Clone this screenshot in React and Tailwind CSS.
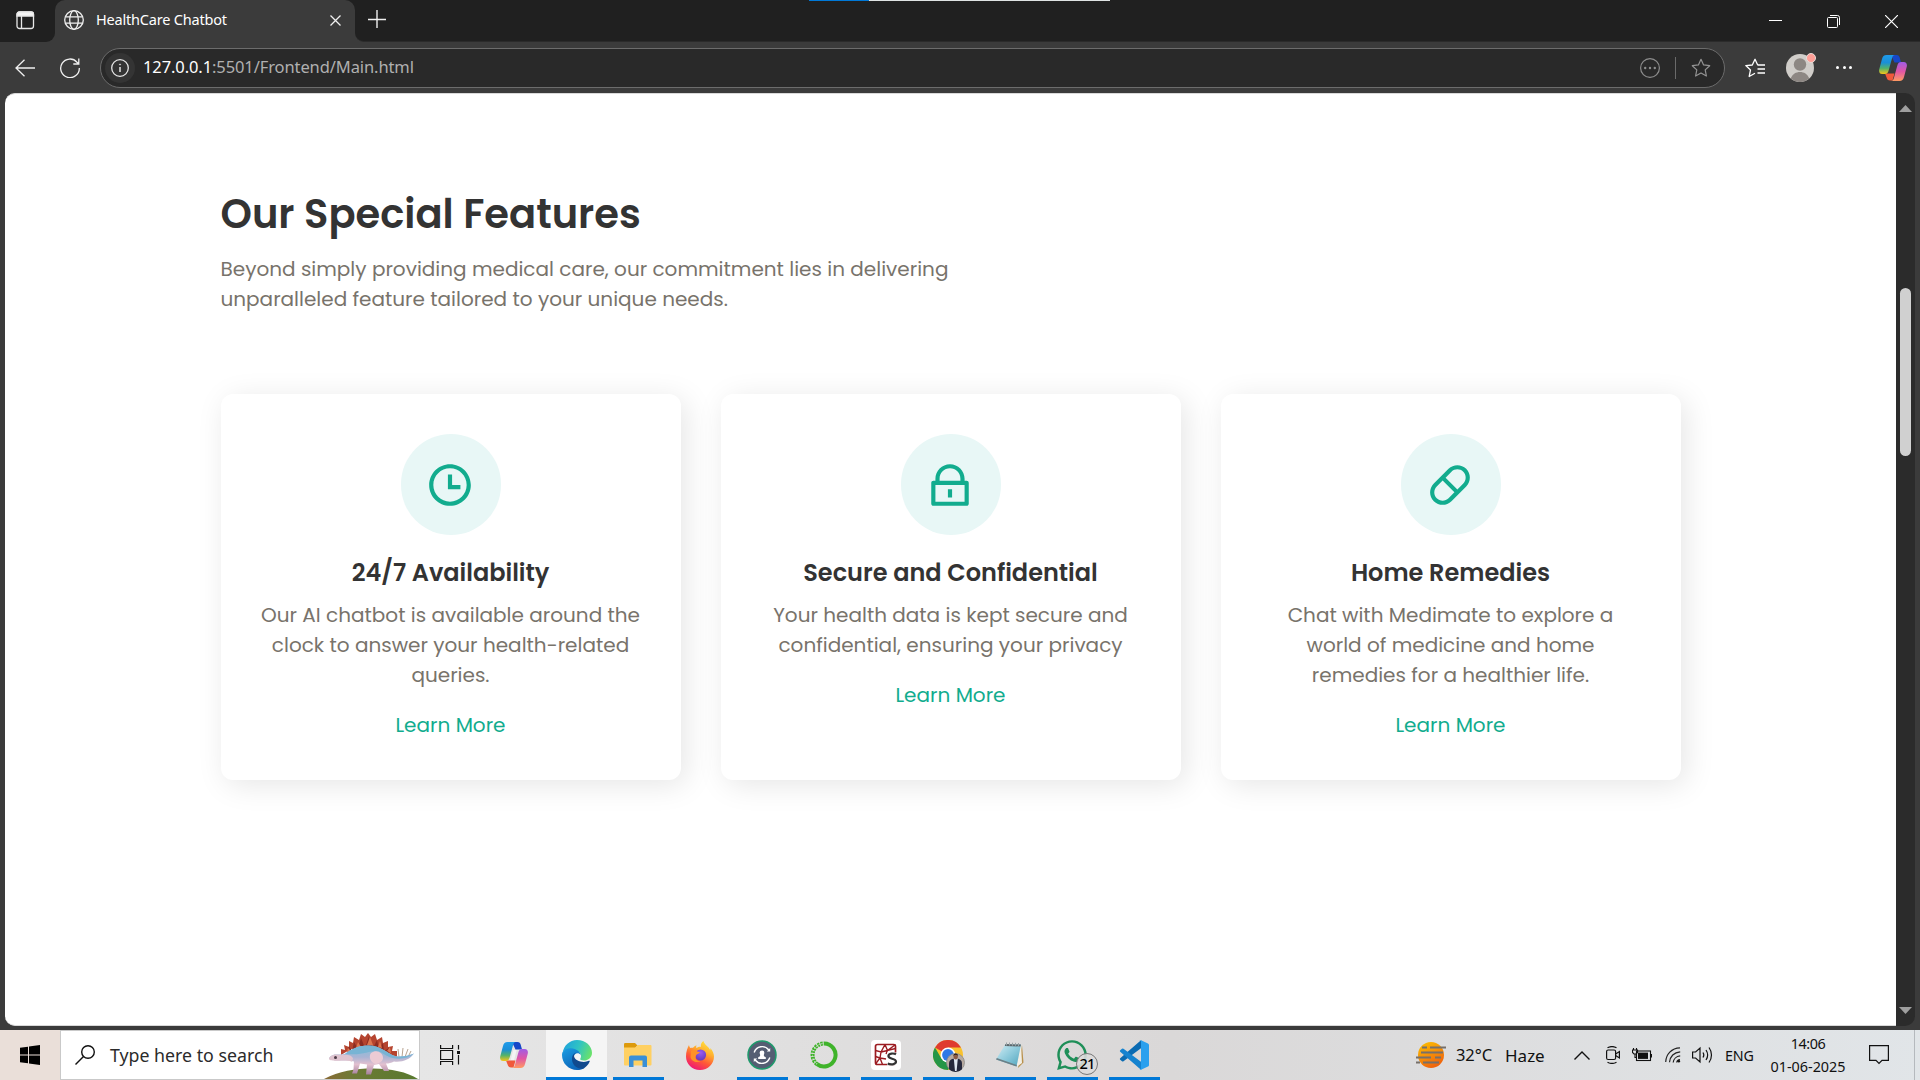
import React from "react";
import { RiTimeLine, RiLockLine, RiCapsuleLine } from "react-icons/ri";
import { FaWhatsapp } from "react-icons/fa";

const features = [
  {
    title: "24/7 Availability",
    Icon: RiTimeLine,
    text: "Our AI chatbot is available around the clock to answer your health-related queries.",
  },
  {
    title: "Secure and Confidential",
    Icon: RiLockLine,
    text: "Your health data is kept secure and confidential, ensuring your privacy",
  },
  {
    title: "Home Remedies",
    Icon: RiCapsuleLine,
    text: "Chat with Medimate to explore a world of medicine and home remedies for a healthier life.",
  },
];

function CopilotIcon({ id, hollow }) {
  return (
    <svg width="28" height="26" viewBox="0 0 28 26" className="shrink-0">
      <defs>
        <linearGradient id={id + "a"} x1="0" y1="0" x2="0" y2="1">
          <stop offset="0" stopColor="#1f9bea" />
          <stop offset=".4" stopColor="#1a8fd8" />
          <stop offset=".7" stopColor="#52b26b" />
          <stop offset="1" stopColor="#f5c518" />
        </linearGradient>
        <linearGradient id={id + "b"} x1="0" y1="0" x2="0" y2="1">
          <stop offset="0" stopColor="#a05ce6" />
          <stop offset=".5" stopColor="#e056a5" />
          <stop offset="1" stopColor="#ff9a62" />
        </linearGradient>
      </defs>
      <path d="M12 0h5.500c2 0 2.800 1.200 3.300 3l1.200 4.500h-6.500z" fill="#1747c8" />
      <path d="M6 18.500h9.500L13.500 25.500H11c-2 0-2.900-1.200-3.400-3z" fill="#f0593b" />
      <path
        d="M7.500 0H16c-1.600 0-2.400 1.300-2.900 3L9.800 15c-.7 2.500-1.600 4-4 4H3.200C.8 19-.3 17 .2 14.500L3 4C3.700 1.500 5 0 7.500 0z"
        fill={"url(#" + id + "a)"}
      />
      <path
        d="M20.500 26H12c1.600 0 2.400-1.300 2.900-3L18.200 11c.7-2.500 1.600-4 4-4h2.600c2.400 0 3.500 2 3 4.500L25 22c-.7 2.500-2 4-4.500 4z"
        fill={"url(#" + id + "b)"}
      />
      {hollow && <path d="M13.300 8h3.300l-2.500 10h-3.400z" fill="#f4f4f4" />}
    </svg>
  );
}

function EdgeIcon() {
  return (
    <svg width="30" height="30" viewBox="0 0 30 30">
      <defs>
        <linearGradient id="edgeTop" x1="0" y1=".3" x2="1" y2=".6">
          <stop offset="0" stopColor="#1fa3dc" />
          <stop offset=".5" stopColor="#2fc3c4" />
          <stop offset="1" stopColor="#6ae26a" />
        </linearGradient>
        <linearGradient id="edgeBlue" x1="0" y1="0" x2=".6" y2="1">
          <stop offset="0" stopColor="#1b9de2" />
          <stop offset="1" stopColor="#0c63b8" />
        </linearGradient>
      </defs>
      <path d="M.6 13C1.800 5.500 7.600 0 15 0c8.500 0 15 6 15 12.700 0 4.800-3.800 7.800-8 7.800-2.600 0-4.200-.8-3.700-1.700.8-1.500 1-3 .2-4.900C16.800 10 4 6 .6 13z" fill="url(#edgeTop)" />
      <path d="M0 15C0 11 4 8 9 8.300c5 .3 9.600 3.400 9.700 7C16.500 11.500 11.600 13.500 11.500 18c0 6 6 10.500 11.500 9.700C20.700 29.300 18 30 15 30 6.700 30 0 23.300 0 15z" fill="url(#edgeBlue)" />
      <path d="M15 12.200c-3.600 1-5 3.600-5 6.800 0 5.500 4.500 10 10.500 9.800 3-1.200 5.800-3.900 7.200-7.300.3-.8-.3-1-.8-.7C21.500 23.500 12.500 21 12 16c0-1.800 1.200-3.100 3-3.800z" fill="#114a8e" />
    </svg>
  );
}

function FolderIcon() {
  return (
    <svg width="28" height="24" viewBox="0 0 28 24">
      <path d="M0 1.200Q0 0 1.200 0H11l2.500 2.500L11 5H0z" fill="#dd9a0c" />
      <path d="M0 4.500h11.500l2-2.500H26.500Q27.500 2 27.500 3V21.500Q27.500 22.500 26.500 22.500H1Q0 22.500 0 21.500z" fill="#ffd062" />
      <path d="M5 24V14.500Q5 12.500 7 12.500H21Q23 12.500 23 14.500V24H18.500V17.500H9.500V24z" fill="#3a8fd6" />
    </svg>
  );
}

function FirefoxIcon() {
  return (
    <svg width="28" height="29" viewBox="0 0 28 29">
      <defs>
        <linearGradient id="fxBody" x1=".8" y1="0" x2=".3" y2="1">
          <stop offset="0" stopColor="#ffe940" />
          <stop offset=".35" stopColor="#ffb02e" />
          <stop offset=".65" stopColor="#ff5a36" />
          <stop offset="1" stopColor="#ee1478" />
        </linearGradient>
        <radialGradient id="fxGlobe" cx=".5" cy=".3" r=".8">
          <stop offset="0" stopColor="#9a5cf0" />
          <stop offset="1" stopColor="#5b34b5" />
        </radialGradient>
      </defs>
      <path d="M3 4c.2 1.400.7 2.300 1.500 3 .8-.3 1.700-.3 2.500-.2C8 5.500 9 4.800 10.500 4.300c-.4 1-.5 1.900-.2 2.700 2-1 3-1.500 4.700-1.300-.8-2 .7-4.600 2.500-5.700.7 4 5.500 5.500 6.700 9.200.2-.8.200-1.400 0-2.200 2.500 2.600 3.800 6 3.800 8.500C28 23 22 29 14 29S0 23 0 15.500C0 10.500 1.500 7 3 4z" fill="url(#fxBody)" />
      <circle cx="14.500" cy="14" r="5.600" fill="url(#fxGlobe)" />
      <path d="M5 10c2-1.500 5-1.200 6.200.4 1.500.1 2.400.5 2.800 1.200-1.200 1.500-3.500 1.200-4.200 3.600-1 3.600 2.200 5.300 5 4.800-4 2.500-9.300.5-10.300-4z" fill="#ff9128" />
    </svg>
  );
}

function PersonSyncIcon() {
  return (
    <svg width="30" height="30" viewBox="0 0 30 30">
      <circle cx="15" cy="15" r="14" fill="#555e73" stroke="#1f9a6c" strokeWidth="1.500" />
      <path d="M7.200 12.500a8.300 8.300 0 0 1 14.600-2.500M22.800 17.500a8.300 8.300 0 0 1-14.600 2.500" fill="none" stroke="#fff" strokeWidth="1.400" />
      <path d="M23.200 8v3.400h-3.400zM6.800 22v-3.400h3.400z" fill="#fff" />
      <circle cx="15" cy="13" r="2.400" fill="#fff" />
      <path d="M13.400 13.500h3.200l.4 2.700 1.800 1v1.800h-7.600v-1.800l1.800-1z" fill="#fff" />
    </svg>
  );
}

function RingIcon() {
  return (
    <svg width="28" height="28" viewBox="0 0 28 28">
      <path d="M14 2.500a11.500 11.500 0 1 1-7 20.600" fill="none" stroke="#3fb32a" strokeWidth="4" />
      <path d="M7 23.100A11.500 11.500 0 0 1 14 2.500" fill="none" stroke="#3fb32a" strokeWidth="4" strokeDasharray="2.200 .9" />
      <path d="M7 23.100A11.500 11.500 0 0 1 14 2.500" fill="none" stroke="#dcdcdc" strokeWidth=".9" strokeDasharray="1.500 1.300" />
    </svg>
  );
}

function SpyderIcon() {
  return (
    <svg width="30" height="30" viewBox="0 0 30 30">
      <rect width="30" height="30" rx="4" fill="#fff" />
      <rect x="4.500" y="4.500" width="20" height="20" rx="2" fill="none" stroke="#9c1c22" strokeWidth="1.700" />
      <path d="M4.500 10.500L10 12l4-7.500M14 4.500l2.500 6 8-2M10 12l6.500-1.500L24.500 4.500M10 12l-1 6-4.500 6M9 18l6 1M9 18l-4.500-1.500M9 18l2.500 6.500M16.500 10.500L15 14" fill="none" stroke="#9c1c22" strokeWidth="1.400" />
      <path d="M16 12.500h10v13H16z" fill="#fff" />
      <path d="M25 14.300c-2-1.200-7.600-1.300-7.600 1.800 0 3.400 7.600 1.800 7.600 5.500 0 3.300-5.800 3.300-8.300 1.900" fill="none" stroke="#333" strokeWidth="2.200" />
    </svg>
  );
}

function ChromeIcon() {
  return (
    <svg width="32" height="32" viewBox="0 0 32 32" className="mt-0.5 ml-0.5">
      <circle cx="15" cy="15" r="15" fill="#f9c22e" />
      <path d="M15 15L2 7.500A15 15 0 0 1 28 7.500H15z" fill="#df3b2f" />
      <path d="M2 7.500A15 15 0 0 0 15 30L21.500 18.700 8.500 18.700z" fill="#259647" />
      <circle cx="15" cy="15" r="7.500" fill="#fff" />
      <circle cx="15" cy="15" r="5.900" fill="#2f78e6" />
      <circle cx="22.500" cy="22.500" r="9" fill="#b7aaa0" stroke="#8a8a8a" strokeWidth=".8" />
      <path d="M16 29.200v-6c0-2.500 2-4.200 4-4.500h5c2 .3 4 2 4 4.500v6a9 9 0 0 1-13 0z" fill="#25283d" />
      <path d="M20.800 18.500h4L23.600 31h-1.600z" fill="#dfe6f2" />
      <ellipse cx="22.700" cy="16.600" rx="2.200" ry="2.800" fill="#8b5b45" />
      <path d="M20.300 16c-.2-3.400 5-3.400 4.800 0-.8-1.600-3.800-1.600-4.800 0z" fill="#211a1a" />
    </svg>
  );
}

function NotepadIcon() {
  return (
    <svg width="28" height="28" viewBox="0 0 28 28">
      <defs>
        <linearGradient id="npPage" x1="0" y1="0" x2="1" y2="1">
          <stop offset="0" stopColor="#d5eef5" />
          <stop offset=".5" stopColor="#8fcbdc" />
          <stop offset="1" stopColor="#4fa4bd" />
        </linearGradient>
      </defs>
      <path d="M26 4l1.500 17.500L22 27z" fill="#b9914c" />
      <path d="M25 3l1 19-5.500 4z" fill="#f2efe6" />
      <path d="M9.500 3L25 3.500 20.500 25.500 0 18.500z" fill="url(#npPage)" />
      <path d="M9.500 3L25 3.500 24.500 5.500 8.800 5z" fill="#5d676b" />
      <path d="M10.500 1.500v3M13.500 1.500v3M16.500 1.700v3M19.500 1.800v3M22.500 2v3" stroke="#9aa3a6" strokeWidth="1" />
      <path d="M0 18.500l20.500 7 .3-1.500L.8 17z" fill="#6b7f86" />
    </svg>
  );
}

function VsCodeIcon() {
  return (
    <svg width="30" height="30" viewBox="0 0 30 30">
      <path d="M1.200 19.700L3 21.300q.7.600 1.500 0L22.300 8V.500q-.6-.1-1.200.5L1.200 18.200q-.8.800 0 1.500z" fill="#0b6bb2" />
      <path d="M1.200 10.300L3 8.700q.7-.6 1.500 0L22.300 22v7.500q-.6.100-1.200-.5L1.200 11.800q-.8-.8 0-1.500z" fill="#1683cf" />
      <path d="M22 .3L29 3.400q1 .5 1 1.600V25q0 1.100-1 1.600L22 29.700q-1 .2-1.600-.7 1.600.8 1.600-1V2q0-1.800-1.600-1Q21 .1 22 .3z" fill="#2ba0ee" />
    </svg>
  );
}

function DinoArt() {
  return (
    <svg width="96" height="48" viewBox="0 0 96 48" className="block shrink-0">
      <defs>
        <linearGradient id="dinoBody" x1="0" y1="0" x2="0" y2="1">
          <stop offset="0" stopColor="#7fc1dc" />
          <stop offset=".4" stopColor="#a9b4d4" />
          <stop offset=".65" stopColor="#e3c0cf" />
          <stop offset="1" stopColor="#a5809c" />
        </linearGradient>
        <linearGradient id="hill" x1="0" y1="0" x2="1" y2="0">
          <stop offset="0" stopColor="#8a6a35" />
          <stop offset=".3" stopColor="#6d7a35" />
          <stop offset="1" stopColor="#58792f" />
        </linearGradient>
      </defs>
      <path d="M1 48C16 40 32 37.500 50 37.500S84 41 95 48z" fill="url(#hill)" />
      <path d="M76 26l-1-8M79 26l1-9M82 26l3-8M85 26l3-6" stroke="#a58a74" strokeWidth=".8" />
      <path d="M18 24l0-6 4 1-1-5 5 2 0-6 4 2 1-6 5 3 2-6 4 3 3-4 3 4 4-3 2 6 5-3 1 6 5-2 0 6 5-1-1 5 5 0 0 6-12-1-18-9-16 2z" fill="#b5442f" />
      <path d="M24 22l2-7 3 5 2-9 4 7 3-11 4 10 4-12 4 12 4-8 2 9 4-6 1 8 5-3 0 6-22-7-14 3z" fill="#8c2c22" />
      <path d="M24 21l1-4 3 3zM33 17l2-6 3 5zM44 14l3-8 3 8zM55 16l2-6 2 7zM64 20l3-4 1 6z" fill="#dd7650" />
      <path d="M6 28c0-2 3-4.500 7-4.500 3 0 6 .5 9-.8C28 19 34 14.500 45 14.500c13 0 20 8.500 27 10.500 6 1.500 13 0 19-2.500-4 6-12 9-20 8-3 1.500-5 2-8 2l3 7.500h-5L56 33l-5 1-3 9.500h-5l1-10-7-1-3 10h-5l1.500-4 .5-8c-5-1.500-9-1-13-1-6 0-9.500 0-10-1.500z" fill="url(#dinoBody)" />
      <path d="M6 28c0-2 3-4.500 7-4.500 3 0 6 .5 9 .2 4 0 7 1 8 3.500l-1 3.500c-5-1.500-9-1-13-1-6 0-9.500-.2-10-1.700z" fill="#dfc4cf" />
      <path d="M45 14.500c13 0 20 8.500 27 10.500 6 1.500 13 0 19-2.500-6 5-14 6-21 4.500-9-2-11-7-17-7-8 0-15 5-31 2.700 6-3.700 12-8.200 23-8.200z" fill="#78b4d4" />
      <path d="M48 22c6-4 12 0 12 5 0 3-3 5-7 6-5-1-8-7-5-11z" fill="#eccbd4" />
      <circle cx="12.500" cy="26.500" r="1.500" fill="#4b3a45" />
    </svg>
  );
}

function TabStrip() {
  return (
    <div className="relative flex h-[42px] bg-[#3b3b3b]">
      <div className="flex w-[55px] items-center rounded-br-[9px] bg-[#202020] pl-4">
        <svg width="19" height="19" viewBox="0 0 19 19" fill="none" stroke="#e8e8e8" strokeWidth="1.300" className="mt-[-2px]">
          <rect x="1" y="1" width="16.500" height="16.500" rx="2.500" />
          <path d="M1 3.500q0-2.500 2.500-2.500h11.500q2.500 0 2.500 2.500v1.500H1z" fill="#f5f5f5" />
          <path d="M5.500 5v12" />
        </svg>
      </div>
      <div className="w-[300px] bg-linear-to-b from-[#202020] from-50% to-[#3b3b3b] to-50%">
        <div className="flex h-[40px] items-center rounded-t-[10px] bg-[#3b3b3b] pl-[9px]">
          <svg width="20" height="20" viewBox="0 0 20 20" fill="none" stroke="#f0f0f0" strokeWidth="1.300">
            <circle cx="10" cy="10" r="9.300" />
            <ellipse cx="10" cy="10" rx="4.300" ry="9.300" />
            <path d="M1.500 6.800h17M1.500 13.200h17" />
          </svg>
          <span className="ml-[12px] w-[234px] text-[14.5px] tracking-[-0.2px] text-white">HealthCare Chatbot</span>
          <svg width="11" height="11" viewBox="0 0 11 11" stroke="#f0f0f0" strokeWidth="1.300">
            <path d="M.5.5l10 10M10.500.5l-10 10" />
          </svg>
        </div>
      </div>
      <div className="flex flex-1 rounded-bl-[9px] border-b border-[#2b2b2b] bg-[#202020] pl-[13px]">
        <svg width="18" height="18" viewBox="0 0 18 18" stroke="#f0f0f0" strokeWidth="1.400" className="mt-[10px]">
          <path d="M9 0v18M0 9.500h18" />
        </svg>
        <div className="flex-1" />
        <div className="mt-[15px] mr-[22px] flex gap-[45px]">
          <svg width="13" height="13" stroke="#fff" strokeWidth="1"><path d="M0 5.500h13" /></svg>
          <svg width="13" height="13" fill="none" stroke="#fff" strokeWidth="1">
            <rect x=".5" y="2.500" width="10" height="10" rx="1" />
            <path d="M3 .5h7.500q2 0 2 2V10" />
          </svg>
          <svg width="13" height="13" stroke="#fff" strokeWidth="1.200"><path d="M0 0l13 13M13 0L0 13" /></svg>
        </div>
      </div>
      <div className="absolute top-0 left-[809px] flex h-px w-[301px] bg-[#dfe3e3]">
        <div className="w-[60px] bg-[#0078d7]" />
      </div>
    </div>
  );
}

const star = "M10 1.300l2.600 5.600 6.100.8-4.500 4.200 1.200 6.100L10 15l-5.400 3 1.200-6.100L1.300 7.700l6.100-.8z";

function Toolbar() {
  return (
    <div className="flex h-[51px] items-center bg-[#3b3b3b] pl-[15px]">
      <svg width="20" height="18" viewBox="0 0 20 18" fill="none" stroke="#f0f0f0" strokeWidth="1.300">
        <path d="M20 9H1M9.500.7L1 9l8.500 8.300" />
      </svg>
      <svg width="20" height="20" viewBox="0 0 20 20" fill="none" stroke="#f0f0f0" strokeWidth="1.300" className="ml-[25px]">
        <path d="M19.300 10A9.300 9.300 0 1 1 17 4.200L18.800 6M18.800.5V6h-5.500" />
      </svg>
      <div className="ml-5 flex h-10 w-[1625px] items-center rounded-full border border-[#6c6c6c] bg-[#292929] pl-1">
        <div className="flex size-[30px] items-center justify-center rounded-full bg-[#343434]">
          <svg width="18" height="18" viewBox="0 0 18 18" fill="none" stroke="#e6e6e6" strokeWidth="1.300">
            <circle cx="9" cy="9" r="8.300" />
            <path d="M9 8v5" strokeWidth="1.500" />
            <circle cx="9" cy="5.500" r=".6" fill="#e6e6e6" strokeWidth=".6" />
          </svg>
        </div>
        <span className="ml-[8px] flex-1 text-[16.5px] tracking-[-0.1px] text-[#b0b0b0]">
          <span className="text-white">127.0.0.1</span>:5501/Frontend/Main.html
        </span>
        <svg width="20" height="20" viewBox="0 0 20 20" fill="#8d8d8d">
          <circle cx="10" cy="10" r="9.400" fill="none" stroke="#8d8d8d" strokeWidth="1.200" />
          <circle cx="5.200" cy="10" r="1.200" /><circle cx="10" cy="10" r="1.200" /><circle cx="14.800" cy="10" r="1.200" />
        </svg>
        <div className="ml-[15px] h-[22px] w-px bg-[#6a6a6a]" />
        <svg width="20" height="20" viewBox="0 0 20 20" fill="none" stroke="#949494" strokeWidth="1.200" strokeLinejoin="round" className="mr-[13px] ml-[15px]">
          <path d={star} />
        </svg>
      </div>
      <svg width="20" height="20" viewBox="0 0 20 20" fill="none" stroke="#fff" strokeWidth="1.300" strokeLinejoin="round" className="ml-5">
        <path d="M12.700 7L10 1.300 7.300 7 .8 7.600l4.700 4.300L4.200 18.500 10 15.300" />
        <path d="M12.500 7H20M12.500 11H20M12.500 15H20" />
      </svg>
      <div className="relative ml-[21px] size-7 shrink-0">
        <svg width="28" height="28" viewBox="0 0 28 28">
          <circle cx="14" cy="14" r="14" fill="#d0cdc9" />
          <circle cx="14" cy="10.500" r="6.200" fill="#8d8783" />
          <path d="M4.700 24.500C6.500 20 10 18 14 18s7.500 2 9.300 6.500a14 14 0 0 1-18.600 0z" fill="#8d8783" />
        </svg>
        <div className="absolute -top-px right-[-2px] size-[10px] rounded-full border border-[#e6dcd8] bg-[#ff9f97]" />
      </div>
      <div className="ml-[22px] flex w-4 justify-between">
        <i className="size-[3px] rounded-full bg-white" />
        <i className="size-[3px] rounded-full bg-white" />
        <i className="size-[3px] rounded-full bg-white" />
      </div>
      <div className="ml-[27px]"><CopilotIcon id="cpTop" /></div>
    </div>
  );
}

function FeatureCard({ title, Icon, text }) {
  return (
    <div className="flex h-[386px] flex-col items-center rounded-[12px] bg-white p-10 text-center text-[20px] leading-[30px] shadow-[5px_5px_30px_rgba(0,0,0,0.1)]">
      <div className="flex h-[101px] w-[100px] shrink-0 items-center justify-center rounded-full bg-[#e8f7f6]">
        <Icon className="mr-px size-[50px] text-[#12ac8e]" />
      </div>
      <h3 className="mt-5 text-[24px] leading-[36px] font-semibold text-[#333333]">{title}</h3>
      <p className="mt-[9px] text-[#78736b]">{text}</p>
      <a className="mt-5 text-[#12ac8e]">Learn More</a>
    </div>
  );
}

function Page() {
  return (
    <div className="flex h-[933px] bg-[#3b3b3b] pr-[5px] pl-[5px]">
      <main className="flex-1 rounded-l-[10px] border-t border-b border-[#d9d9d9] bg-white pt-[90px] font-['Poppins','Inter',sans-serif]">
        <div className="mx-auto w-[1460px]">
          <h2 className="text-[40px] leading-[60px] font-semibold text-[#333333]">Our Special Features</h2>
          <p className="mt-2.5 w-[750px] text-[20px] leading-[30px] text-[#78736b]">
            Beyond simply providing medical care, our commitment lies in delivering unparalleled feature tailored to your unique needs.
          </p>
          <div className="mt-20 grid grid-cols-3 gap-10">
            {features.map((f) => <FeatureCard key={f.title} {...f} />)}
          </div>
        </div>
      </main>
      <div className="flex w-[19px] flex-col items-center rounded-r-[10px] bg-[#2b2b2b] pt-3 pb-3">
        <svg width="13" height="7" fill="#9f9f9f"><path d="M6.500 0L13 7H0z" /></svg>
        <div className="mt-[176px] h-[168px] w-[11px] rounded-full bg-[#d0d0d0]" />
        <div className="flex-1" />
        <svg width="13" height="7" fill="#9f9f9f"><path d="M0 0h13L6.500 7z" /></svg>
      </div>
    </div>
  );
}

const apps = [
  { id: "copilot", icon: <CopilotIcon id="cpBar" hollow /> },
  { id: "edge", icon: <EdgeIcon />, active: true },
  { id: "folder", icon: <FolderIcon />, open: true },
  { id: "firefox", icon: <FirefoxIcon /> },
  { id: "sync", icon: <PersonSyncIcon />, open: true },
  { id: "ring", icon: <RingIcon />, open: true },
  { id: "spyder", icon: <SpyderIcon />, open: true },
  { id: "chrome", icon: <ChromeIcon />, open: true },
  { id: "notepad", icon: <NotepadIcon />, open: true },
  {
    id: "whatsapp",
    open: true,
    icon: (
      <div className="relative">
        <FaWhatsapp className="size-[34px] text-[#1f8f58]" />
        <span className="absolute -right-[9px] -bottom-[3px] flex size-[22px] items-center justify-center rounded-full border border-[#777] bg-[#dcdada]/90 text-[14.5px] font-medium tracking-[-0.8px] text-black">21</span>
      </div>
    ),
  },
  { id: "vscode", icon: <VsCodeIcon />, open: true },
];

function Tray() {
  return (
    <div className="flex h-full w-[504px] items-center text-[#111]">
      <svg width="30" height="26" viewBox="0 0 30 26">
        <defs>
          <linearGradient id="haze" x1="0" y1="0" x2=".5" y2="1">
            <stop offset="0" stopColor="#fdc400" /><stop offset="1" stopColor="#f0650c" />
          </linearGradient>
        </defs>
        <circle cx="15" cy="13" r="13" fill="url(#haze)" />
        <path d="M6 5.500h5M14 5.500h16M5 10.500h22M0 15.500h15M19 15.500h6M0 20.500h4M7 20.500h16" stroke="#77706a" strokeWidth="2" />
      </svg>
      <span className="ml-[10px] w-[49px] pt-px text-[16.5px] tracking-[-0.1px]">32°C</span>
      <span className="w-[69px] pt-px text-[17px]">Haze</span>
      <svg width="16" height="9" fill="none" stroke="#111" strokeWidth="1.400"><path d="M.5 8.500L8 1l7.500 7.500" /></svg>
      <svg width="14" height="18" viewBox="0 0 14 18" fill="none" stroke="#111" strokeWidth="1.200" className="ml-4">
        <rect x=".6" y="4" width="9" height="9.500" rx="1.500" />
        <path d="M9.600 8l3.800-2.500v6.500L9.600 9.500M1.500 1.800C4 .4 8 .4 10.500 1.800M1.500 16.200c2.500 1.400 6.500 1.400 9 0" />
      </svg>
      <svg width="20" height="14" viewBox="0 0 20 14" fill="none" stroke="#111" strokeWidth="1.100" className="ml-3">
        <rect x="4.500" y="3" width="14" height="9.500" />
        <rect x="6" y="4.600" width="10" height="6.300" fill="#111" stroke="none" />
        <path d="M19.500 6v3.500M1.500 0v2M4.500 0v2M.5 2h5v2.500L4 6H2L.5 4.500zM3 6v3.500h1.500" />
      </svg>
      <svg width="16" height="16" viewBox="0 0 16 16" fill="none" stroke="#222" strokeWidth="1.200" className="ml-[13px]">
        <path d="M.7 15C1 7.500 6.500 1 15 .8M4.500 15.300C5 9.500 9 5.200 15.200 4.800M8.200 15.500c.3-3.300 3-6.300 7-6.600" />
        <path d="M11.700 15.500c.2-1.400 1.500-2.600 3.300-2.800" />
        <circle cx="13.800" cy="14.300" r="1.300" fill="#111" stroke="none" />
      </svg>
      <svg width="21" height="18" viewBox="0 0 21 18" fill="none" stroke="#111" strokeWidth="1.200" className="ml-[11px]">
        <path d="M.6 6h3L8 2v14l-4.400-4H.6zM11 6.500c1 1.500 1 3.500 0 5M14 4c2 3 2 7 0 10M17 1.500c3.300 4.500 3.300 10.500 0 15" />
      </svg>
      <span className="ml-3 w-7 pt-px text-[14.3px] tracking-[-0.1px]">ENG</span>
      <div className="ml-3 flex w-[86px] flex-col items-center pt-0.5 text-[14.4px] leading-[22.7px]">
        <span className="tracking-[-0.5px]">14:06</span>
        <span>01-06-2025</span>
      </div>
      <svg width="20" height="20" viewBox="0 0 20 20" fill="none" stroke="#111" strokeWidth="1.200" className="ml-[18px]">
        <path d="M.6.600h18.800v14.800H13L10 18.500 7 15.400H.6z" />
      </svg>
      <div className="ml-[25px] h-full w-px bg-[#b5b9bd]" />
    </div>
  );
}

function Taskbar() {
  return (
    <div className="flex h-[50px] items-center bg-[#eadfd9]">
      <div className="flex w-[60px] justify-center">
        <svg width="20" height="20" viewBox="0 0 20 20">
          <path d="M0 2.800L8 1.700V9.400H0zM9 1.500L20 0v9.400H9zM0 10.500h8v7.700L0 17.200zM9 10.500h11V20L9 18.400z" />
        </svg>
      </div>
      <div className="flex h-full w-[360px] items-center border border-[#c9c9c9] bg-white pl-[14px]">
        <svg width="20" height="20" viewBox="0 0 20 20" fill="none" stroke="#111" strokeWidth="1.400">
          <circle cx="13" cy="7" r="6.300" /><path d="M8.500 11.500L.5 19.500" />
        </svg>
        <span className="ml-[15px] flex-1 text-[17.75px] text-[#2b2b2b]">Type here to search</span>
        <DinoArt />
      </div>
      <div className="flex h-full flex-1 items-center bg-linear-to-r from-[#e6e6e6] via-[#dad8d8] via-50% to-[#e1e5e8]">
        <div className="flex w-[63px] justify-start pl-5">
          <svg width="20" height="20" viewBox="0 0 20 20" fill="none" stroke="#111" strokeWidth="1.200">
            <path d="M.6 0v3.500h12V0M.6 20v-3.500h12V20M.6 5.500h12v9H.6zM18.500 0v4.500M18.500 10v9.500" />
            <rect x="17" y="6" width="3" height="3" fill="#111" stroke="none" />
          </svg>
        </div>
        {apps.map((a) => (
          <div
            key={a.id}
            className={
              "relative flex h-full shrink-0 items-center justify-center " +
              (a.active ? "ml-px w-[61px] bg-[#f5f5f5]" : "w-[62px]")
            }
          >
            {a.icon}
            {(a.active || a.open) && (
              <div className={"absolute bottom-0 h-[3px] bg-[#0078d7] " + (a.active ? "w-full" : "w-[51px]")} />
            )}
          </div>
        ))}
        <div className="flex-1" />
        <Tray />
      </div>
    </div>
  );
}

export default function App() {
  return (
    <div className="h-[1080px] w-[1920px] overflow-hidden bg-[#3b3b3b] font-['Segoe_UI','Noto_Sans',sans-serif]">
      <TabStrip />
      <Toolbar />
      <Page />
      <div className="h-1" />
      <Taskbar />
    </div>
  );
}
